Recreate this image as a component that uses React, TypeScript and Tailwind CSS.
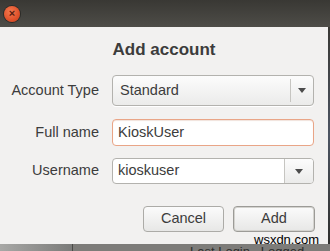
const font = { fontFamily: '"Liberation Sans", "DejaVu Sans", sans-serif' };

function Arrow() {
  return (
    <svg width="8" height="5" viewBox="0 0 8 5" className="block">
      <path d="M0 0 L8 0 L4 5 Z" fill="#4c4c4c" />
    </svg>
  );
}

export default function App() {
  return (
    <div
      className="relative w-[330px] h-[251px] overflow-hidden bg-[#3a3935] text-[#3c3c3c]"
      style={font}
    >
      {/* title bar */}
      <div className="h-[27px] flex items-center pl-[4px] bg-gradient-to-b from-[#393834] to-[#4e4d48]">
        <div className="w-[16px] h-[16px] rounded-full flex items-center justify-center bg-[radial-gradient(circle_at_40%_35%,#f47a50,#e0512a_60%,#c2401f)] shadow-[0_0_0_1px_#2c2b28]">
          <span className="text-[11px] leading-none text-[#5a2010] font-bold -mt-px">×</span>
        </div>
      </div>

      <div className="flex h-[217px]">
        {/* dialog body */}
        <div className="w-[328px] bg-[#f2f1f0] flex flex-col">
          <div className="h-[20px] mt-[13px] text-center text-[17px] leading-[20px] font-bold text-[#3c3c3c]">
            Add account
          </div>

          <div className="mt-[15px] grid grid-cols-[99px_202px] gap-x-[13px] items-center text-[14.5px]">
            <div className="text-right">Account Type</div>
            <div className="h-[31px] rounded-[4px] border border-[#b3b2ae] bg-gradient-to-b from-[#fcfcfc] to-[#ebebea] shadow-[0_1px_0_#ffffff] flex items-center">
              <span className="flex-1 pl-[7px]">Standard</span>
              <span className="w-px h-[23px] bg-[#c6c5c1]" />
              <span className="w-[22px] flex justify-center">
                <Arrow />
              </span>
            </div>

            <div className="text-right mt-[13px]">Full name</div>
            <div className="mt-[13px] h-[27px] rounded-[4px] border border-[#e9a587] bg-white flex items-center pl-[5px] shadow-[inset_0_1px_1px_#f1e3dc]">
              KioskUser
            </div>

            <div className="text-right mt-[12px]">Username</div>
            <div className="mt-[12px] h-[26px] rounded-[4px] border border-[#b3b2ae] bg-white flex items-stretch overflow-hidden">
              <span className="flex-1 flex items-center pl-[5px]">kioskuser</span>
              <span className="w-[29px] border-l border-[#c6c5c1] bg-gradient-to-b from-[#fcfcfc] to-[#ebebea] flex items-center justify-center">
                <Arrow />
              </span>
            </div>
          </div>

          <div className="mt-[22px] flex justify-end gap-[9px] pr-[13px] text-[14.5px]">
            <div className="w-[81px] h-[26px] rounded-[4px] border border-[#acaba7] bg-gradient-to-b from-[#fbfbfb] to-[#e7e7e6] flex items-center justify-center">
              Cancel
            </div>
            <div className="w-[82px] h-[26px] rounded-[4px] border border-[#9c9b97] bg-gradient-to-b from-[#fbfbfb] to-[#e7e7e6] shadow-[inset_0_0_0_1px_#d4d3cf] flex items-center justify-center">
              Add
            </div>
          </div>
        </div>
        <div className="flex-1 bg-gradient-to-b from-[#3a3935] via-[#4d5563] to-[#2f2f2d]" />
      </div>

      {/* background below the dialog */}
      <div className="h-[7px] flex">
        <div className="w-[72px] bg-gradient-to-r from-[#a8a8a6] to-[#7b7b79]" />
        <div className="w-px bg-[#4a4a48]" />
        <div className="flex-1 bg-[#7d7c79] overflow-hidden relative">
          <span className="absolute left-[117px] top-[1px] text-[13px] leading-[13px] text-[#2e2e2c] whitespace-pre">
            Last Login   Logged
          </span>
        </div>
      </div>

      {/* watermark */}
      <div className="absolute left-[254px] top-[233px] text-[13px] leading-[14px] text-black">
        wsxdn.com
      </div>
    </div>
  );
}
